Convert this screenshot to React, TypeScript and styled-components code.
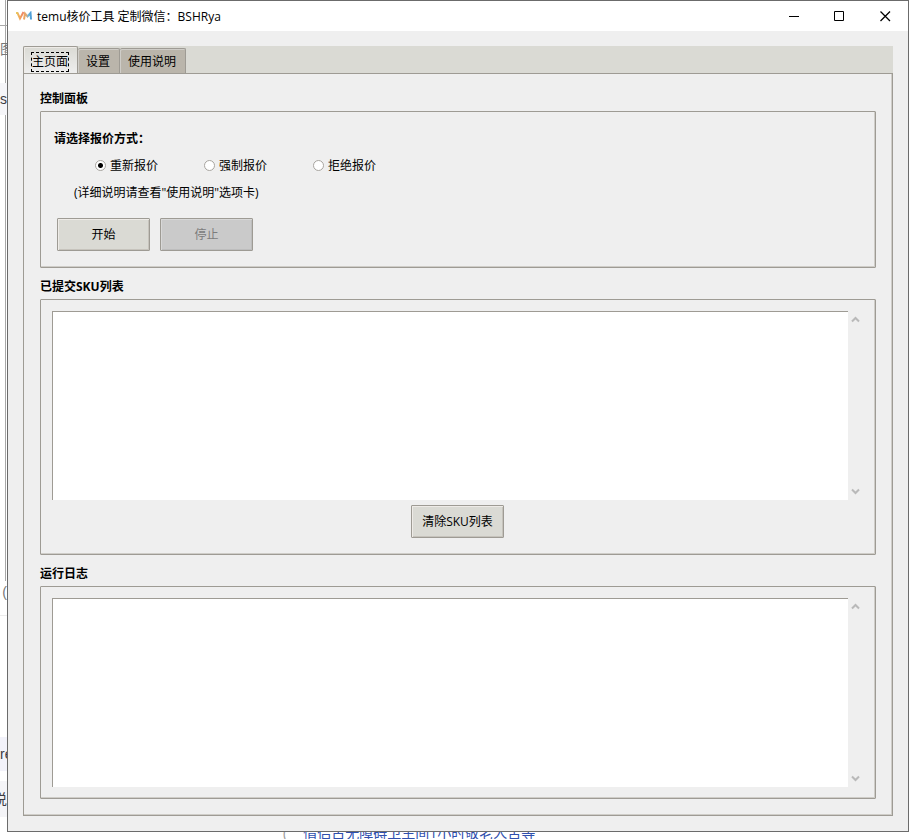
import React, { useState } from "react";
import styled, { createGlobalStyle } from "styled-components";

const color = {
  face: "#efefef",
  strip: "#dadad4",
  tab: "#bab5ab",
  dark: "#9e9b94",
  light: "#cfcdc8",
  frame: "#6b6b6b",
};

const GlobalStyle = createGlobalStyle`
  *, *::before, *::after { box-sizing: border-box; }
  body {
    margin: 0;
    background: #fff;
    color: #000;
    font: 12px/18px "Open Sans", "Noto Sans CJK SC", sans-serif;
  }
  button, input, textarea { font: inherit; color: inherit; margin: 0; }
`;

const Desktop = styled.div`
  display: grid;
  grid-template-columns: 7px minmax(0, 1fr) 7px;
  grid-template-rows: minmax(0, 1fr) 7px;
  min-height: 100vh;
`;

const LeftStrip = styled.aside`
  grid-row: 1 / 3;
  display: flex;
  flex-direction: column;
  overflow: hidden;
  background: linear-gradient(#a8a8a8, #a8a8a8) 5px 0 / 1px 581px no-repeat;
`;

const Fragment = styled.div<{ $tall: number; $tint?: string; $ink?: string; $end?: boolean }>`
  display: flex;
  align-items: center;
  flex: none;
  height: ${(p) => p.$tall}px;
  background: ${(p) => p.$tint || "transparent"};
  color: ${(p) => p.$ink || "#3c3c44"};
  font-family: "Liberation Sans", "Noto Sans CJK SC", sans-serif;
  font-size: 14px;
  white-space: nowrap;
  justify-content: ${(p) => (p.$end ? "flex-end" : "flex-start")};
`;

const BottomStrip = styled.footer`
  display: flex;
  align-items: flex-end;
  gap: 16px;
  height: 7px;
  padding-left: 276px;
  overflow: hidden;
  color: #9a9a9a;
  font-size: 14px;
  line-height: 12px;
  white-space: nowrap;
`;

const BackLink = styled.a`
  color: #2f4fae;
  text-decoration: none;
`;

const Window = styled.main`
  display: flex;
  flex-direction: column;
  border: 1px solid ${color.frame};
  background: ${color.face};
`;

const TitleBar = styled.header`
  display: flex;
  align-items: center;
  height: 30px;
  padding-left: 8px;
  background: #fff;
`;

const Title = styled.h1`
  flex: 1;
  margin: 0;
  padding: 2px 0 0 5px;
  font-size: 12px;
  font-weight: 400;
`;

const CaptionButton = styled.button`
  display: flex;
  align-items: center;
  justify-content: center;
  width: 46px;
  height: 30px;
  padding: 0;
  border: 0;
  background: none;
`;

const Body = styled.div`
  flex: 1;
  display: flex;
  flex-direction: column;
  padding: 15px;
`;

const TabList = styled.div`
  display: flex;
  height: 27px;
  background: ${color.strip};
`;

const Tab = styled.button<{ $active: boolean }>`
  height: ${(p) => (p.$active ? 28 : 25)}px;
  align-self: ${(p) => (p.$active ? "flex-start" : "flex-end")};
  padding: ${(p) => (p.$active ? "2px 8px 0 7px" : "1px 9px 0 8px")};
  border: 1px solid ${color.dark};
  border-bottom: 0;
  border-left-width: ${(p) => (p.$active ? 1 : 0)}px;
  border-radius: 2px 2px 0 0;
  background: ${(p) => (p.$active ? `linear-gradient(${color.strip}, ${color.face})` : color.tab)};
  box-shadow: inset 1px 1px 0 ${(p) => (p.$active ? "#eeebe7" : "#cfcdc8")};
`;

const FocusRing = styled.span<{ $on: boolean }>`
  display: block;
  border: ${(p) => (p.$on ? "1px dashed #000" : "0")};
`;

const TabPage = styled.section`
  flex: 1;
  display: flex;
  flex-direction: column;
  gap: 10px;
  padding: 16px;
  border: 1px solid ${color.dark};
  box-shadow: inset -1px -1px 0 ${color.light};
`;

const Group = styled.section<{ $grow?: boolean }>`
  display: flex;
  flex-direction: column;
  flex: ${(p) => (p.$grow ? "1 1 auto" : "none")};
`;

const GroupTitle = styled.h2`
  margin: 0 0 3px;
  font-size: 12px;
  font-weight: 700;
`;

const Frame = styled.div<{ $pad: string }>`
  flex: 1;
  display: flex;
  flex-direction: column;
  padding: ${(p) => p.$pad};
  border: 1px solid ${color.dark};
  border-radius: 1px;
  box-shadow: inset -1px -1px 0 ${color.light};
`;

const Choices = styled.fieldset`
  display: flex;
  flex-wrap: wrap;
  gap: 9px 46px;
  margin: 0;
  padding: 0 0 0 41px;
  border: 0;
`;

const Legend = styled.legend`
  padding: 0;
  margin: 0 0 9px -41px;
  font-weight: 700;
`;

const Choice = styled.label`
  display: flex;
  align-items: center;
  gap: 4px;
`;

const Radio = styled.input`
  && {
    appearance: none;
    width: 11px;
    height: 11px;
    margin-bottom: 2px;
    border: 1px solid #a8a5a0;
    border-radius: 50%;
    background: #fff;
  }
  &&:checked {
    background: radial-gradient(circle, #000 0 2px, #fff 3px);
  }
`;

const Note = styled.p`
  margin: 9px 0 16px 20px;
`;

const Actions = styled.div<{ $center?: boolean }>`
  display: flex;
  gap: 10px;
  justify-content: ${(p) => (p.$center ? "center" : "flex-start")};
  padding: ${(p) => (p.$center ? "5px 0 0" : "0 3px")};
`;

const PushButton = styled.button`
  width: 93px;
  height: 33px;
  padding: 0;
  border: 1px solid ${color.dark};
  border-radius: 1px;
  background: ${color.strip};
  box-shadow: inset 1px 1px 0 #eeebe7, inset -1px -1px 0 #c6c3bc;
  &:disabled {
    background: #cacaca;
    color: #7c7c7c;
    box-shadow: inset 1px 1px 0 #d8d8d8, inset -1px -1px 0 #bdbdbd;
  }
`;

const TextRow = styled.div`
  flex: 1;
  display: flex;
`;

const TextBox = styled.textarea`
  flex: 1;
  min-width: 0;
  min-height: 96px;
  padding: 2px;
  border: 0 solid ${color.dark};
  border-width: 1px 0 0 1px;
  border-radius: 0;
  background: #fff;
  outline: 0;
  resize: none;
`;

const ScrollTrack = styled.div`
  display: flex;
  flex-direction: column;
  justify-content: space-between;
  width: 15px;
  padding: 1px 0;
`;

const ScrollButton = styled.button`
  display: flex;
  align-items: center;
  justify-content: center;
  width: 15px;
  height: 15px;
  padding: 0;
  border: 0;
  background: none;
`;

function Logo() {
  return (
    <svg width="16" height="10" viewBox="0 0 16 10" fill="none" strokeWidth="2" aria-hidden="true">
      <defs>
        <linearGradient id="vee" x1="0" x2="1">
          <stop offset="0" stopColor="#e6cf62" />
          <stop offset=".5" stopColor="#f2a45c" />
          <stop offset="1" stopColor="#ee8468" />
        </linearGradient>
        <linearGradient id="em" x1="0" x2="1">
          <stop offset="0" stopColor="#f0a45e" />
          <stop offset=".35" stopColor="#dba878" />
          <stop offset=".6" stopColor="#6fb7dc" />
          <stop offset="1" stopColor="#4a9bd6" />
        </linearGradient>
      </defs>
      <path d="M0 2H1.5L4 7.5L7.5 1" stroke="url(#vee)" />
      <path d="M8 8.5L9 2.5L11.5 5.5L14.5 2L15 8.5" stroke="url(#em)" />
    </svg>
  );
}

function Chevron({ down }: { down?: boolean }) {
  return (
    <svg width="9" height="7" viewBox="0 0 9 7" fill="none" stroke="#b9b9b9" strokeWidth="2" aria-hidden="true">
      <path d={down ? "M1 1.5L4.5 5L8 1.5" : "M1 5.5L4.5 2L8 5.5"} />
    </svg>
  );
}

function ScrolledText({ label }: { label: string }) {
  return (
    <TextRow>
      <TextBox aria-label={label} />
      <ScrollTrack>
        <ScrollButton type="button" aria-label="向上滚动"><Chevron /></ScrollButton>
        <ScrollButton type="button" aria-label="向下滚动"><Chevron down /></ScrollButton>
      </ScrollTrack>
    </TextRow>
  );
}

const tabs = ["主页面", "设置", "使用说明"];
const modes = ["重新报价", "强制报价", "拒绝报价"];

export default function App() {
  const [tab, setTab] = useState(0);
  const [mode, setMode] = useState(0);

  return (
    <>
      <GlobalStyle />
      <Desktop>
        <LeftStrip>
          <Fragment $tall={25} />
          <Fragment $tall={1} $tint="#a8a8a8" />
          <Fragment $tall={46} $ink="#777">图</Fragment>
          <Fragment $tall={11} />
          <Fragment $tall={32} $tint="#f5f5f8">s</Fragment>
          <Fragment $tall={462} />
          <Fragment $tall={30} $ink="#777" $end>(</Fragment>
          <Fragment $tall={8} />
          <Fragment $tall={1} $tint="#ececec" />
          <Fragment $tall={121} />
          <Fragment $tall={34} $tint="#f2f2fa">re</Fragment>
          <Fragment $tall={10} />
          <Fragment $tall={36} $tint="#f4f4f7" $end>说</Fragment>
        </LeftStrip>

        <Window>
          <TitleBar>
            <Logo />
            <Title>temu核价工具 定制微信：BSHRya</Title>
            <CaptionButton type="button" aria-label="最小化">
              <svg width="11" height="11" stroke="#000" aria-hidden="true"><path d="M1 5.5H11" /></svg>
            </CaptionButton>
            <CaptionButton type="button" aria-label="最大化">
              <svg width="11" height="11" stroke="#000" fill="none" aria-hidden="true"><path d="M.5 .5H9.5V9.5H.5Z" /></svg>
            </CaptionButton>
            <CaptionButton type="button" aria-label="关闭">
              <svg width="11" height="11" stroke="#000" strokeWidth="1.3" aria-hidden="true"><path d="M.5 .5L10 10M10 .5L.5 10" /></svg>
            </CaptionButton>
          </TitleBar>

          <Body>
            <TabList role="tablist">
              {tabs.map((name, i) => (
                <Tab key={name} type="button" role="tab" aria-selected={tab === i} $active={tab === i} onClick={() => setTab(i)}>
                  <FocusRing $on={tab === i}>{name}</FocusRing>
                </Tab>
              ))}
            </TabList>

            <TabPage role="tabpanel">
              <Group>
                <GroupTitle>控制面板</GroupTitle>
                <Frame $pad="18px 13px 16px">
                  <Choices>
                    <Legend>请选择报价方式：</Legend>
                    {modes.map((name, i) => (
                      <Choice key={name}>
                        <Radio type="radio" name="mode" checked={mode === i} onChange={() => setMode(i)} />
                        {name}
                      </Choice>
                    ))}
                  </Choices>
                  <Note>(详细说明请查看"使用说明"选项卡)</Note>
                  <Actions>
                    <PushButton type="button">开始</PushButton>
                    <PushButton type="button" disabled>停止</PushButton>
                  </Actions>
                </Frame>
              </Group>

              <Group $grow>
                <GroupTitle>已提交SKU列表</GroupTitle>
                <Frame $pad="11px 12px 16px 11px">
                  <ScrolledText label="已提交SKU列表" />
                  <Actions $center>
                    <PushButton type="button">清除SKU列表</PushButton>
                  </Actions>
                </Frame>
              </Group>

              <Group $grow>
                <GroupTitle>运行日志</GroupTitle>
                <Frame $pad="11px 12px 11px 11px">
                  <ScrolledText label="运行日志" />
                </Frame>
              </Group>
            </TabPage>
          </Body>
        </Window>

        <span />
        <BottomStrip>
          <span>(</span>
          <BackLink href="#">情侣古无障碍卫生间1小时敬老人舌等</BackLink>
        </BottomStrip>
      </Desktop>
    </>
  );
}
